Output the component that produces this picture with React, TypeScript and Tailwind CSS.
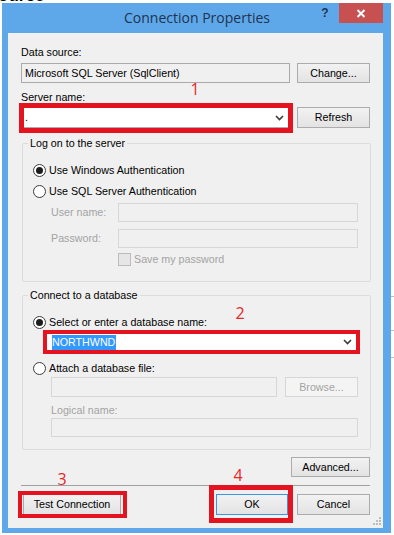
import React from "react";

const Chevron = () => (
  <svg width="9" height="6" viewBox="0 0 9 6">
    <path d="M1 1 L4.5 4.5 L8 1" fill="none" stroke="#3a3a3a" strokeWidth="1.6" />
  </svg>
);

function Btn({
  children,
  className = "",
  disabled = false,
  def = false,
}: {
  children: React.ReactNode;
  className?: string;
  disabled?: boolean;
  def?: boolean;
}) {
  const border = def ? "border-[#3c95e3]" : disabled ? "border-[#d6d6d6]" : "border-[#acacac]";
  const bg = disabled
    ? "bg-[#f4f4f4] text-[#a3a3a3]"
    : "bg-gradient-to-b from-[#f2f2f2] to-[#e3e3e3] text-black";
  return (
    <div className={`flex items-center justify-center border ${border} ${bg} ${className}`}>
      {children}
    </div>
  );
}

const Radio = ({ checked = false }: { checked?: boolean }) => (
  <div className="w-[13px] h-[13px] shrink-0 rounded-full border border-[#3c3c3c] bg-white flex items-center justify-center">
    {checked && <div className="w-[7px] h-[7px] rounded-full bg-[#1c1c1c]" />}
  </div>
);

const Disabled = ({ className = "" }: { className?: string }) => (
  <div className={`border border-[#d7d7d7] bg-[#f0f0f0] ${className}`} />
);

export default function App() {
  return (
    <div className="relative w-[394px] h-[535px] bg-white overflow-hidden font-['Liberation_Sans',Arial,sans-serif] text-[10.7px] leading-[13px] text-black">
      {/* fragments of the page behind the dialog */}
      <div className="absolute left-[-2px] top-[-13px] font-bold text-[17px] leading-[17px]">ource</div>
      <div className="absolute left-[391px] top-[296px] w-[3px] h-px bg-[#bdbdbd]" />
      <div className="absolute left-[391px] top-[330px] w-[3px] h-px bg-[#bdbdbd]" />
      <div className="absolute left-[391px] top-[357px] w-[3px] h-px bg-[#bdbdbd]" />

      {/* window */}
      <div className="ml-[2px] mt-[3px] w-[389px] h-[530px] bg-[#5ea8e9] flex flex-col">
        {/* title bar */}
        <div className="relative h-[30px] flex justify-center">
          <div className="font-['Open_Sans',sans-serif] text-[14px] leading-[30px] text-[#1f3352] pl-[1px]">
            Connection Properties
          </div>
          <div className="absolute left-[318px] top-[3px] w-[10px] text-center font-bold text-[12px] leading-[14px] text-[#1f3352]">
            ?
          </div>
          <div className="absolute right-[8px] top-0 w-[44px] h-[20px] bg-[#c75050] flex items-center justify-center">
            <svg width="10" height="9" viewBox="0 0 10 9">
              <path d="M1.5 1 L8.5 8 M8.5 1 L1.5 8" stroke="#ffffff" strokeWidth="2" />
            </svg>
          </div>
        </div>

        {/* client area */}
        <div className="relative ml-[6px] w-[375px] h-[495px] bg-[#f0f0f0] px-[13px] pt-[13px] flex flex-col">
          <div>Data source:</div>
          <div className="mt-[4px] flex h-[20px] gap-[7px]">
            <div className="w-[269px] border border-[#aaaaaa] bg-[#f0f0f0] flex items-center pl-[3px]">
              Microsoft SQL Server (SqlClient)
            </div>
            <Btn className="w-[73px]">Change...</Btn>
          </div>

          <div className="mt-[8px]">Server name:</div>
          <div className="mt-[3px] flex h-[21px] gap-[7px]">
            <div className="w-[269px] border border-[#abadb3] bg-white flex items-center justify-between pl-[3px] pr-[5px]">
              <span>.</span>
              <Chevron />
            </div>
            <Btn className="w-[73px]">Refresh</Btn>
          </div>

          {/* Log on group */}
          <div className="relative mt-[15px] ml-[1px] w-[349px] border border-[#dcdcdc] rounded-[2px] pl-[10px] pb-[15px] flex flex-col">
            <span className="absolute -top-[7px] left-[5px] bg-[#f0f0f0] px-[2px]">Log on to the server</span>
            <div className="mt-[19px] h-[14px] flex items-center gap-[3px]">
              <Radio checked />
              <span>Use Windows Authentication</span>
            </div>
            <div className="mt-[7px] h-[14px] flex items-center gap-[3px]">
              <Radio />
              <span>Use SQL Server Authentication</span>
            </div>
            <div className="mt-[5px] ml-[18px] h-[19px] flex items-center">
              <span className="w-[67px] text-[#a3a3a3]">User name:</span>
              <Disabled className="w-[240px] h-[19px]" />
            </div>
            <div className="mt-[7px] ml-[18px] h-[19px] flex items-center">
              <span className="w-[67px] text-[#a3a3a3]">Password:</span>
              <Disabled className="w-[240px] h-[19px]" />
            </div>
            <div className="mt-[5px] ml-[85px] h-[13px] flex items-center gap-[3px]">
              <div className="w-[13px] h-[13px] border border-[#bcbcbc] bg-[#e6e6e6]" />
              <span className="text-[#a3a3a3]">Save my password</span>
            </div>
          </div>

          {/* Connect group */}
          <div className="relative mt-[13px] ml-[1px] w-[349px] border border-[#dcdcdc] rounded-[2px] pl-[10px] pb-[12px] flex flex-col">
            <span className="absolute -top-[7px] left-[5px] bg-[#f0f0f0] px-[2px]">Connect to a database</span>
            <div className="mt-[19px] h-[14px] flex items-center gap-[3px]">
              <Radio checked />
              <span>Select or enter a database name:</span>
            </div>
            <div className="mt-[3px] ml-[12px] w-[313px] h-[20px] border border-[#abadb3] bg-white flex items-center justify-between pl-[6px] pr-[5px]">
              <span className="bg-[#3399ff] text-white leading-[15px] pr-[1px]">NORTHWND</span>
              <Chevron />
            </div>
            <div className="mt-[9px] h-[14px] flex items-center gap-[3px]">
              <Radio />
              <span>Attach a database file:</span>
            </div>
            <div className="mt-[2px] ml-[18px] h-[20px] flex gap-[8px]">
              <Disabled className="w-[226px] h-[20px]" />
              <Btn disabled className="w-[73px]">
                Browse...
              </Btn>
            </div>
            <div className="mt-[7px] ml-[18px] text-[#a3a3a3]">Logical name:</div>
            <Disabled className="mt-[1px] ml-[18px] w-[307px] h-[19px]" />
          </div>

          <Btn className="mt-[7px] self-end w-[79px] h-[20px]">Advanced...</Btn>

          <div className="mt-[8px] h-px w-full bg-[#a0a0a0]" />

          <div className="mt-[8px] h-[21px] flex">
            <Btn className="ml-[2px] w-[98px]">Test Connection</Btn>
            <Btn def className="ml-auto w-[72px]">
              OK
            </Btn>
            <Btn className="ml-[9px] w-[73px]">Cancel</Btn>
          </div>

          {/* size grip */}
          <svg className="absolute right-[2px] bottom-[3px]" width="8" height="8" viewBox="0 0 8 8">
            <rect x="6" y="0" width="2" height="2" fill="#bdbdbd" />
            <rect x="3" y="3" width="2" height="2" fill="#bdbdbd" />
            <rect x="6" y="3" width="2" height="2" fill="#bdbdbd" />
            <rect x="0" y="6" width="2" height="2" fill="#bdbdbd" />
            <rect x="3" y="6" width="2" height="2" fill="#bdbdbd" />
            <rect x="6" y="6" width="2" height="2" fill="#bdbdbd" />
          </svg>

          {/* annotations */}
          <div className="absolute left-[11px] top-[70px] w-[274px] h-[30px] border-[5px] border-[#e3141f]" />
          <div className="absolute left-[35px] top-[297px] w-[317px] h-[24px] border-[4px] border-[#e3141f]" />
          <div className="absolute left-[10px] top-[458px] w-[109px] h-[27px] border-[4px] border-[#e3141f]" />
          <div className="absolute left-[201px] top-[452px] w-[84px] h-[38px] border-[5px] border-[#e3141f]" />

          <span className="absolute left-[177px] top-[46px] w-[20px] text-center font-['Open_Sans',sans-serif] text-[16px] leading-[20px] text-[#e8262a]">1</span>
          <span className="absolute left-[222px] top-[270px] w-[20px] text-center font-['Open_Sans',sans-serif] text-[16px] leading-[20px] text-[#e8262a]">2</span>
          <span className="absolute left-[44px] top-[436px] w-[20px] text-center font-['Open_Sans',sans-serif] text-[16px] leading-[20px] text-[#e8262a]">3</span>
          <span className="absolute left-[220px] top-[432px] w-[20px] text-center font-['Open_Sans',sans-serif] text-[16px] leading-[20px] text-[#e8262a]">4</span>
        </div>
      </div>
    </div>
  );
}
